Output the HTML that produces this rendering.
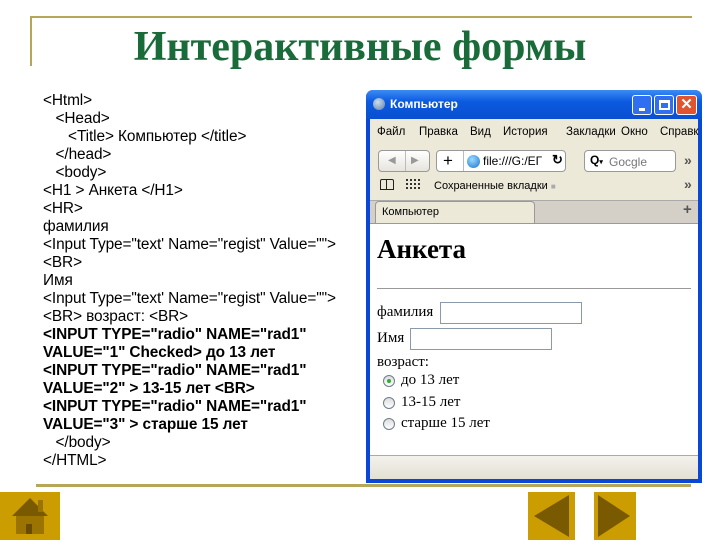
<!DOCTYPE html>
<html><head><meta charset="utf-8"><style>
*{margin:0;padding:0;box-sizing:border-box}
body{width:720px;height:540px;background:#fff;position:relative;overflow:hidden;font-family:"Liberation Sans",sans-serif}
.a{position:absolute}
h1{position:absolute;left:0;width:720px;top:23px;text-align:center;font:bold 42px "Liberation Serif",serif;color:#1a6b3a}
.code{left:43px;top:92px;font-size:15.4px;line-height:18px;color:#000;white-space:pre;letter-spacing:-0.1px}
.code b{font-weight:bold}
.win{left:366px;top:90px;width:336px;height:393px;background:#0a47d6;border-radius:7px 7px 0 0}
.tb{left:0;top:0;width:336px;height:29px;border-radius:7px 7px 0 0;background:linear-gradient(#3d8cf5,#0b5ae0 40%,#0a4fd0)}
.in{left:4px;top:29px;width:328px;height:360px;background:#ece9d8}
.menu{font-size:11.5px;color:#000}
.btn{border:1px solid #999;border-radius:4px;background:linear-gradient(#fff,#e6e4dc)}
.serif{font-family:"Liberation Serif",serif;color:#000}
.inp{border:1px solid #8a9aa8;background:#fff}
.rad{width:12px;height:12px;border-radius:50%;border:1px solid #6d7d8d;background:linear-gradient(#dcdcdc,#fff)}
.gold{background:#cc9d00}
</style></head><body>
<div class="a" style="left:30px;top:16px;width:662px;height:2px;background:#b5a757"></div>
<div class="a" style="left:30px;top:16px;width:2px;height:50px;background:#b5a757"></div>
<h1>Интерактивные формы</h1>
<div class="a code">&lt;Html&gt;
   &lt;Head&gt;
      &lt;Title&gt; Компьютер &lt;/title&gt;
   &lt;/head&gt;
   &lt;body&gt;
&lt;H1 &gt; Анкета &lt;/H1&gt;
&lt;HR&gt;
фамилия
&lt;Input Type="text' Name="regist" Value=""&gt;
&lt;BR&gt;
Имя
&lt;Input Type="text' Name="regist" Value=""&gt;
&lt;BR&gt; возраст: &lt;BR&gt;
<b>&lt;INPUT TYPE="radio" NAME="rad1"
VALUE="1" Checked&gt; до 13 лет
&lt;INPUT TYPE="radio" NAME="rad1"
VALUE="2" &gt; 13-15 лет &lt;BR&gt;
&lt;INPUT TYPE="radio" NAME="rad1"
VALUE="3" &gt; старше 15 лет</b>
   &lt;/body&gt;
&lt;/HTML&gt;</div>

<div class="a win">
 <div class="a tb">
  <div class="a" style="left:7px;top:8px;width:12px;height:12px;border-radius:50%;background:radial-gradient(circle at 40% 35%,#cde,#5b7fa8)"></div>
  <div class="a" style="left:24px;top:7px;color:#fff;font-weight:bold;font-size:12px">Компьютер</div>
  <div class="a" style="left:266px;top:5px;width:20px;height:20px;border:1px solid #fff;border-radius:3px;background:#2f6ff0"><div class="a" style="left:6px;top:12px;width:6px;height:3px;background:#fff"></div></div>
  <div class="a" style="left:288px;top:5px;width:20px;height:20px;border:1px solid #fff;border-radius:3px;background:#2f6ff0"><div class="a" style="left:4px;top:4px;width:11px;height:10px;border:2px solid #fff;border-top-width:3px"></div></div>
  <div class="a" style="left:310px;top:5px;width:21px;height:20px;border:1px solid #fff;border-radius:3px;background:#e0552f;color:#fff;font-size:15px;font-weight:bold;text-align:center;line-height:18px">✕</div>
 </div>
 <div class="a in">
  <div class="a menu" style="left:7px;top:7px">Файл</div>
  <div class="a menu" style="left:49px;top:7px">Правка</div>
  <div class="a menu" style="left:100px;top:7px">Вид</div>
  <div class="a menu" style="left:133px;top:7px">История</div>
  <div class="a menu" style="left:196px;top:7px">Закладки</div>
  <div class="a menu" style="left:251px;top:7px">Окно</div>
  <div class="a menu" style="left:290px;top:7px">Справк</div>
  <div class="a btn" style="left:8px;top:31px;width:52px;height:22px"><span class="a" style="left:9px;top:4px;font-size:10px;color:#999">◀</span><span class="a" style="left:26px;top:0;width:1px;height:20px;background:#bbb"></span><span class="a" style="left:32px;top:4px;font-size:10px;color:#999">▶</span></div>
  <div class="a btn" style="left:66px;top:31px;width:130px;height:22px;background:#fff"><span class="a" style="left:6px;top:0;font-size:17px;line-height:20px">+</span><span class="a" style="left:26px;top:0;width:1px;height:20px;background:#bbb"></span><span class="a" style="left:30px;top:4px;width:13px;height:13px;border-radius:50%;background:radial-gradient(circle at 40% 35%,#9df,#1a6fd0)"></span><span class="a" style="left:46px;top:3px;font-size:12px">file:///G:/ЕГ</span><span class="a" style="left:115px;top:1px;font-size:13px;font-weight:bold">↻</span></div>
  <div class="a btn" style="left:214px;top:31px;width:92px;height:22px;background:#fff"><span class="a" style="left:5px;top:2px;font-size:12px;font-weight:bold">Q<span style="font-size:7px">▾</span></span><span class="a" style="left:24px;top:4px;font-size:12px;color:#777">Gocgle</span></div>
  <div class="a" style="left:314px;top:33px;font-size:14px;color:#555;font-weight:bold">»</div>
  <div class="a" style="left:10px;top:60px;width:14px;height:11px;border:1.5px solid #222;border-radius:2px 2px 0 0"><div class="a" style="left:4.5px;top:0;width:1.5px;height:9px;background:#222"></div></div>
  <div class="a" style="left:36px;top:60px;width:14px;height:12px;background:repeating-linear-gradient(90deg,#333 0 2px,transparent 2px 4px);-webkit-mask:repeating-linear-gradient(#000 0 2px,transparent 2px 4px)"></div>
  <div class="a menu" style="left:64px;top:61px;font-size:11px">Сохраненные вкладки <span style="color:#aaa;font-size:8px">■</span></div>
  <div class="a" style="left:314px;top:57px;font-size:14px;color:#555;font-weight:bold">»</div>
  <div class="a" style="left:0;top:81px;width:328px;height:24px;background:#d4d0c8;border-top:1px solid #aaa"></div>
  <div class="a" style="left:5px;top:82px;width:160px;height:23px;background:#ece9d8;border:1px solid #999;border-bottom:none;border-radius:4px 4px 0 0"></div>
  <div class="a menu" style="left:12px;top:87px;font-size:11px">Компьютер</div>
  <div class="a" style="left:313px;top:82px;font-size:15px;color:#555;font-weight:bold">+</div>
  <div class="a" style="left:0;top:104px;width:328px;height:232px;background:#fff;border-top:1px solid #999">
   <div class="a serif" style="left:7px;top:10px;font-size:27px;font-weight:bold">Анкета</div>
   <div class="a" style="left:7px;top:64px;width:314px;height:1px;background:#999"></div>
   <div class="a serif" style="left:7px;top:80px;font-size:15px">фамилия</div>
   <div class="a inp" style="left:70px;top:78px;width:142px;height:22px"></div>
   <div class="a serif" style="left:7px;top:106px;font-size:15px">Имя</div>
   <div class="a inp" style="left:40px;top:104px;width:142px;height:22px"></div>
   <div class="a serif" style="left:7px;top:130px;font-size:15px">возраст:</div>
   <div class="a rad" style="left:13px;top:151px"><div class="a" style="left:3px;top:3px;width:4px;height:4px;border-radius:50%;background:#3a3"></div></div>
   <div class="a serif" style="left:31px;top:148px;font-size:15px">до 13 лет</div>
   <div class="a rad" style="left:13px;top:173px"></div>
   <div class="a serif" style="left:31px;top:170px;font-size:15px">13-15 лет</div>
   <div class="a rad" style="left:13px;top:194px"></div>
   <div class="a serif" style="left:31px;top:191px;font-size:15px">старше 15 лет</div>
  </div>
  <div class="a" style="left:0;top:336px;width:328px;height:24px;background:linear-gradient(#f3f2ec,#e3e0d4);border-top:1px solid #aaa"></div>
 </div>
</div>
<div class="a" style="left:36px;top:484px;width:655px;height:3px;background:#b5a757"></div>
<div class="a gold" style="left:0;top:492px;width:60px;height:48px">
 <svg width="60" height="48" style="position:absolute;left:0;top:0"><polygon points="30,6 12,24 48,24" fill="#7a5a00"/><rect x="16" y="24" width="28" height="18" fill="#9a7300"/><rect x="26" y="32" width="6" height="10" fill="#6a4c00"/><rect x="38" y="8" width="5" height="12" fill="#9a7300"/></svg>
</div>
<div class="a gold" style="left:528px;top:492px;width:47px;height:48px"><svg width="47" height="48"><polygon points="6,24 41,3 41,45" fill="#7a5a00"/></svg></div>
<div class="a gold" style="left:594px;top:492px;width:42px;height:48px"><svg width="42" height="48"><polygon points="4,3 36,24 4,45" fill="#7a5a00"/></svg></div>
</body></html>
